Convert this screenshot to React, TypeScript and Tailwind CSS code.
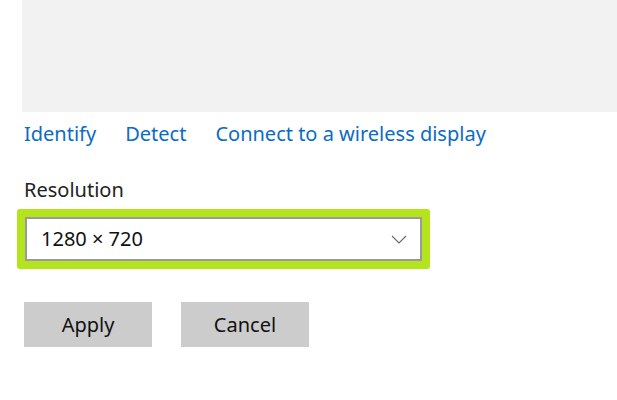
const ChevronDown = () => (
  <svg width="16" height="9" viewBox="0 0 16 9" fill="none" stroke="#666" strokeWidth="1.1">
    <path d="M1 1l7 7 7-7" />
  </svg>
);

export default function App() {
  const font = { fontFamily: '"Noto Sans", "Open Sans", sans-serif' };

  return (
    <div className="w-[617px] h-[400px] bg-white overflow-hidden" style={font}>
      <div className="ml-[22px] h-[112px] bg-[#f2f2f2]" />

      <div className="flex gap-[29px] pl-[24px] pt-[9px] text-[20px] leading-[26px] text-[#0a6cc4]">
        <span>Identify</span>
        <span>Detect</span>
        <span>Connect to a wireless display</span>
      </div>

      <div className="pl-[24px] pt-[30px] text-[20px] leading-[25px] text-[#222]">Resolution</div>

      <div className="ml-[17px] mt-[7px] w-[413px] rounded-[3px] bg-[#b4e41c] p-[8px]">
        <div className="flex h-[44px] items-center justify-between border-2 border-[#9a9a9a] bg-white pl-[14px] pr-[13px]">
          <span className="text-[20px] text-[#111]">1280 × 720</span>
          <ChevronDown />
        </div>
      </div>

      <div className="flex gap-[29px] pl-[24px] pt-[33px]">
        <button className="h-[45px] w-[128px] bg-[#cccccc] text-[20px] text-[#111]">Apply</button>
        <button className="h-[45px] w-[128px] bg-[#cccccc] text-[20px] text-[#111]">Cancel</button>
      </div>
    </div>
  );
}
